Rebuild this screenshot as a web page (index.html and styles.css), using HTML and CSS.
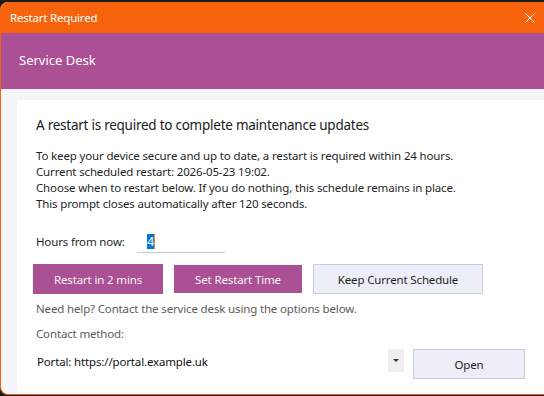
FILE: index.html
```html
<html>
<head>
    <link rel="stylesheet" href="styles.css">
</head>
<body>
    <div class="window">
        <div class="titlebar">
            <span class="title">Restart Required</span>
            <span class="close">
                <svg width="10" height="10" viewBox="0 0 10 10">
                    <path d="M0.5 0.5 L9.5 9.5 M9.5 0.5 L0.5 9.5" stroke="#ffffff" stroke-width="1" fill="none"/>
                </svg>
            </span>
        </div>
        <div class="header">Service Desk</div>
        <div class="content">
            <div class="panel">
                <div class="heading">A restart is required to complete maintenance updates</div>
                <div class="message">
                    To keep your device secure and up to date, a restart is required within 24 hours.<br>
                    Current scheduled restart: 2026-05-23 19:02.<br>
                    Choose when to restart below. If you do nothing, this schedule remains in place.<br>
                    This prompt closes automatically after 120 seconds.
                </div>
                <div class="hours-row">
                    <span class="label">Hours from now:</span>
                    <div class="hours-input"><span class="selected">4</span></div>
                </div>
                <div class="buttons">
                    <button class="button primary">Restart in 2 mins</button>
                    <button class="button primary small">Set Restart Time</button>
                    <button class="button secondary wide">Keep Current Schedule</button>
                </div>
                <div class="hint">Need help? Contact the service desk using the options below.</div>
                <div class="hint method">Contact method:</div>
                <div class="contact-row">
                    <div class="combo">
                        <span class="combo-text">Portal: https://portal.example.uk</span>
                        <span class="combo-arrow"></span>
                    </div>
                    <button class="button secondary open">Open</button>
                </div>
            </div>
        </div>
    </div>
</body>
</html>
```

FILE: styles.css
```css
body {
    margin: 0;
    background-color: #1c1c1c;
    font-family: "Noto Sans", "Open Sans", sans-serif;
    overflow: hidden;
    height: 396px;
}
.window {
    margin-top: 2px;
    width: 568px;
    height: 392px;
    border: 1px solid #f7630c;
    border-top: none;
    border-radius: 8px;
    overflow: hidden;
    display: flex;
    flex-direction: column;
    background-color: #f4f5f9;
}
.titlebar {
    height: 31px;
    background-color: #f7630c;
    display: flex;
    align-items: center;
    padding-left: 9px;
    padding-right: 16px;
    color: #fff;
    font-size: 11.5px;
    letter-spacing: -0.2px;
}
.title {
    flex: 1;
}
.close {
    width: 46px;
    height: 31px;
    display: flex;
    align-items: center;
    justify-content: center;
}
.header {
    height: 56px;
    background-color: #ac5096;
    color: #fff;
    font-size: 13px;
    display: flex;
    align-items: center;
    padding-left: 18px;
    padding-bottom: 2px;
    box-sizing: border-box;
}
.content {
    flex: 1;
    display: flex;
    padding: 11px 0 1px 16px;
}
.panel {
    flex: 1;
    background-color: #fff;
    padding: 15px 0 0 19px;
    font-size: 11.5px;
    letter-spacing: -0.15px;
}
.heading {
    font-size: 13.5px;
    letter-spacing: -0.25px;
    line-height: 20px;
    color: #1a1a1a;
}
.message {
    margin-top: 13px;
    line-height: 16px;
    color: #1f1f1f;
}
.hours-row {
    margin-top: 18px;
    display: flex;
    align-items: center;
    color: #1f1f1f;
}
.label {
    width: 101px;
}
.hours-input {
    width: 78px;
    height: 22px;
    padding-left: 10px;
    border-bottom: 1px solid #c4cad8;
    display: flex;
    align-items: center;
    font-size: 12.5px;
}
.selected {
    background-color: #0078d7;
    color: #fff;
    line-height: 15px;
    border-right: 1px solid #f28c28;
}
.buttons {
    margin: 11px 0 0 -3px;
    display: flex;
    align-items: center;
    gap: 11px;
}
.button {
    height: 30px;
    border: none;
    font-family: inherit;
    font-size: 11.5px;
    letter-spacing: -0.15px;
    padding: 0;
}
.button.primary {
    width: 130px;
    background-color: #ac5096;
    color: #f4f4f4;
}
.button.small {
    width: 128px;
    height: 28px;
}
.button.secondary {
    background-color: #eceff7;
    border: 1px solid #c6cedc;
    color: #1f1f1f;
}
.button.wide {
    width: 170px;
}
.hint {
    margin-top: 7px;
    line-height: 16px;
    color: #5c5c5c;
}
.hint.method {
    margin-top: 9px;
}
.contact-row {
    margin: 7px 0 0 -3px;
    display: flex;
    align-items: flex-start;
    gap: 9px;
}
.combo {
    width: 371px;
    height: 26px;
    display: flex;
    align-items: flex-start;
}
.combo-text {
    flex: 1;
    padding-left: 4px;
    line-height: 26px;
    color: #111;
}
.combo-arrow {
    width: 16px;
    height: 23px;
    background-color: #efefef;
    position: relative;
}
.combo-arrow::after {
    content: "";
    position: absolute;
    left: 5px;
    top: 10px;
    border-left: 3px solid transparent;
    border-right: 3px solid transparent;
    border-top: 3px solid #333;
}
.button.open {
    width: 112px;
}
```
